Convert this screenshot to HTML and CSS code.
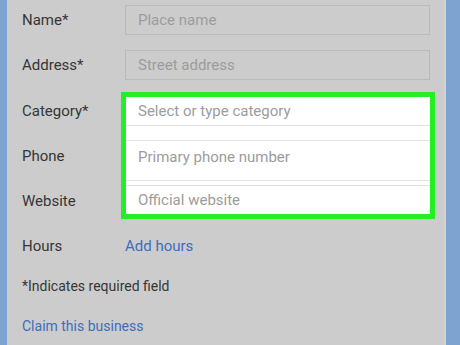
FILE: index.html
```html
<!DOCTYPE html>
<html lang="en">
<head>
    <meta charset="UTF-8">
    <meta name="viewport" content="width=device-width, initial-scale=1.0">
    <title>Add a place</title>
    <link rel="stylesheet" href="styles.css">
</head>
<body>
    <div class="screen">
        <div class="edge edge-left"></div>
        <div class="form">
            <div class="row">
                <label class="label">Name*</label>
                <div class="input">Place name</div>
            </div>
            <div class="row">
                <label class="label">Address*</label>
                <div class="input">Street address</div>
            </div>
            <div class="group">
                <div class="group-labels">
                    <label class="label">Category*</label>
                    <label class="label">Phone</label>
                    <label class="label">Website</label>
                </div>
                <div class="highlight">
                    <div class="field field-category">Select or type category</div>
                    <div class="field field-phone">Primary phone number</div>
                    <div class="field field-website">Official website</div>
                </div>
            </div>
            <div class="row row-hours">
                <label class="label">Hours</label>
                <a class="link">Add hours</a>
            </div>
            <p class="note">*Indicates required field</p>
            <a class="link claim">Claim this business</a>
        </div>
        <div class="edge edge-right"></div>
    </div>
</body>
</html>
```

FILE: styles.css
```css
body {
    margin: 0;
    font-family: Roboto, 'Liberation Sans', sans-serif;
    font-size: 15px;
    color: #363636;
    background-color: #cccccc;
}
.screen {
    display: flex;
    height: 345px;
    overflow: hidden;
}
.edge {
    background-color: #7fa3d0;
}
.edge-left {
    width: 7px;
}
.edge-right {
    width: 14px;
}
.form {
    flex: 1;
    padding: 5px 14px 0 15px;
    background-color: #cccccc;
    border-right: 2px solid #d3d3d3;
}
.row {
    display: flex;
    align-items: center;
    height: 30px;
    margin-bottom: 15px;
}
.label {
    display: block;
    width: 103px;
    flex-shrink: 0;
}
.input {
    flex: 1;
    height: 28px;
    line-height: 28px;
    padding-left: 12px;
    border: 1px solid #b9b9b9;
    color: #9c9c9c;
}
.group {
    display: flex;
    margin-top: 17px;
}
.group-labels .label {
    line-height: 28px;
    margin-bottom: 17px;
}
.group-labels .label:last-child {
    margin-bottom: 0;
}
.highlight {
    flex: 1;
    height: 117px;
    margin-left: 1px;
    background-color: #ffffff;
    outline: 5px solid #22ef24;
    color: #9c9c9c;
}
.field {
    padding-left: 12px;
    border-color: #e2e2e2;
    border-style: solid;
    border-width: 0;
}
.field-category {
    line-height: 28px;
    border-bottom-width: 1px;
    margin-bottom: 14px;
}
.field-phone {
    line-height: 32px;
    padding-bottom: 7px;
    border-top-width: 1px;
    border-bottom-width: 1px;
    margin-bottom: 4px;
}
.field-website {
    line-height: 28px;
    border-top-width: 1px;
}
.row-hours {
    height: 28px;
    margin-top: 17px;
    margin-bottom: 0;
}
.link {
    color: #3e6cbf;
    text-decoration: none;
}
.note {
    margin: 0;
    margin-top: 8px;
    font-size: 14px;
    line-height: 36px;
}
.claim {
    display: block;
    margin-top: 4px;
    font-size: 14px;
    line-height: 36px;
}
```
